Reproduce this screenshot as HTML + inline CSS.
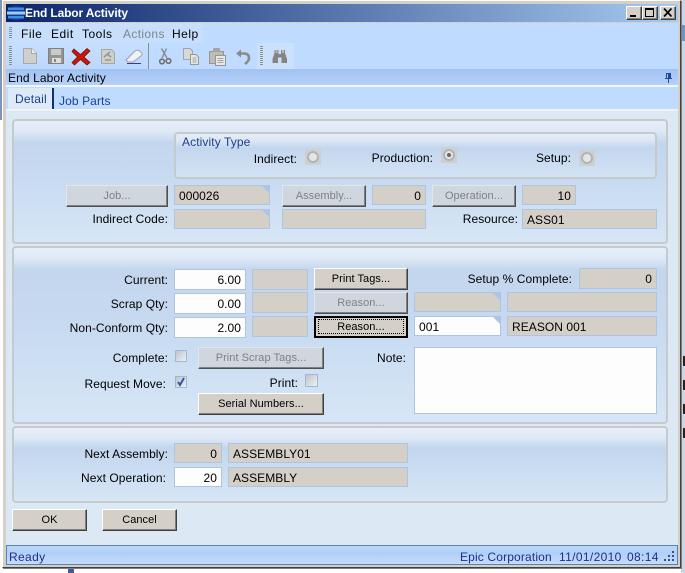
<!DOCTYPE html>
<html><head><meta charset="utf-8"><style>
html,body{margin:0;padding:0;width:685px;height:573px;overflow:hidden;background:#fff}
#r{position:absolute;left:0;top:0;width:685px;height:573px;overflow:hidden;font:12px "Liberation Sans",sans-serif;color:#000}
#r div,#r svg{position:absolute;box-sizing:border-box}
.t{white-space:nowrap;line-height:14px;letter-spacing:.1px}
.l{text-align:right;white-space:nowrap;line-height:14px;letter-spacing:.06px}
.p{left:12px;width:656px;border:2px solid #c6cacc;border-radius:4px;background:linear-gradient(#e6eef8 0,#dfe9f6 10px,#c3d6ee 22px,#c6d9f0 40%,#d6e6f6 100%)}
.f{border:1px solid #aec4e0;background:#d4d0c8;line-height:20px;padding:0 4px;white-space:nowrap;letter-spacing:.05px}
.w{background:#fdfdfd}.n{text-align:right}
.c:after{content:"";position:absolute;right:-1px;top:-1px;border-style:solid;border-width:0 9px 9px 0;border-color:transparent #aec4e6 transparent transparent}
.b{background:#d4d0c8;border:1px solid;border-color:#fff #404040 #404040 #fff;box-shadow:inset -1px -1px 0 #808080;text-align:center;font-size:11px;line-height:21px;letter-spacing:.05px;white-space:nowrap}
.d{background:#cfd6de;color:#7c8288;border-color:#e0e6ec #505050 #505050 #e0e6ec}
.g{background-image:repeating-linear-gradient(#8a9099 0,#8a9099 1px,transparent 1px,transparent 2px)}
.x{border:1px solid #9fb8da;background:linear-gradient(135deg,#bfc4ca,#eef0f2)}
.rd{width:16px;height:16px;background:#ccd0d3}
.rd:after{content:"";position:absolute;left:2px;top:2px;width:12px;height:12px;border-radius:50%;border:2px solid #b0b4b4;background:#e4e6e6;box-sizing:border-box}
</style></head><body><div id="r">
<div style="left:0;top:0;width:3px;height:120px;background:#7e95b5"></div>
<div style="left:0;top:120px;width:3px;height:453px;background:#fff"></div>
<div style="left:68px;top:566px;width:6px;height:7px;background:#3a5f9a"></div>
<div style="left:681px;top:0;width:4px;height:573px;background:#c9d6e6"></div>
<div style="left:682px;top:25px;width:3px;height:16px;background:#6f93c8"></div>
<div style="left:683px;top:356px;width:2px;height:10px;background:#222"></div>
<div style="left:683px;top:380px;width:2px;height:10px;background:#222"></div>
<div style="left:683px;top:404px;width:2px;height:10px;background:#222"></div>
<div style="left:683px;top:428px;width:2px;height:10px;background:#222"></div>
<!-- window -->
<div style="left:2px;top:0;width:679px;height:568px;background:#d4d0c8;border:1px solid #fff;border-right:1px solid #404040;border-bottom:1px solid #404040;box-shadow:1px 1px 0 #808080"></div>
<div style="left:6px;top:4px;width:672px;height:18px;background:linear-gradient(90deg,#0a246a,#a6caf0)"></div>
<svg style="left:7px;top:5px" width="18" height="16" viewBox="0 0 18 16"><ellipse cx="9" cy="8" rx="8.500" ry="7.500" fill="#17389a"/><rect x="1" y="2.500" width="16" height="2.500" fill="#3f8fe6"/><rect x="0" y="6.500" width="18" height="3" fill="#9ad0f6"/><rect x="1" y="11" width="16" height="2.500" fill="#3f8fe6"/></svg>
<div class="t" style="left:25px;top:6px;color:#fff;font-weight:bold;letter-spacing:-.15px">End Labor Activity</div>
<div class="b" style="left:626px;top:6px;width:16px;height:14px"></div>
<div style="left:630px;top:15px;width:6px;height:2px;background:#000"></div>
<div class="b" style="left:642px;top:6px;width:16px;height:14px"></div>
<div style="left:645px;top:8px;width:9px;height:9px;border:1px solid #000;border-top-width:2px"></div>
<div class="b" style="left:660px;top:6px;width:16px;height:14px"></div>
<svg style="left:663px;top:8px" width="10" height="9" viewBox="0 0 10 9"><path d="M1 0.500L8.500 8.500M8.500 0.500L1 8.500" stroke="#000" stroke-width="1.700" fill="none"/></svg>
<!-- menu/toolbars -->
<div style="left:6px;top:23px;width:672px;height:46px;background:#bfdbff"></div>
<div style="left:6px;top:23px;width:197px;height:20px;background:#c7dffd"></div>
<div style="left:6px;top:43px;width:143px;height:26px;background:linear-gradient(#c7dffd,#bcd8fd)"></div>
<div style="left:257px;top:43px;width:37px;height:26px;background:#cbe0fa"></div>
<div class="g" style="left:9px;top:27px;width:3px;height:11px"></div>
<div class="t" style="left:21px;top:27px;letter-spacing:.5px">File</div>
<div class="t" style="left:51px;top:27px;letter-spacing:.5px">Edit</div>
<div class="t" style="left:82px;top:27px;letter-spacing:.5px">Tools</div>
<div class="t" style="left:123px;top:27px;color:#7d8590;letter-spacing:.35px">Actions</div>
<div class="t" style="left:172px;top:27px;letter-spacing:.5px">Help</div>
<div class="g" style="left:9px;top:46px;width:3px;height:19px"></div>
<div class="g" style="left:260px;top:46px;width:3px;height:19px"></div>
<div style="left:148px;top:43px;width:1px;height:26px;background:#8a8f96"></div>
<svg style="left:20px;top:44px" width="280" height="24" viewBox="0 0 280 24">
<path d="M3.500 4.500H11.500L16.500 9.500V19.500H3.500Z" fill="#cfcfcf" stroke="#a8a8a8"/><path d="M11.500 4.500V9.500H16.500" fill="#eee" stroke="#a8a8a8"/>
<path d="M28.500 4.500H43.500V19.500H28.500Z" fill="#969696" stroke="#808080"/><rect x="31" y="5" width="10" height="6" fill="#cacaca"/><rect x="32" y="14" width="9" height="5" fill="#dedede"/><rect x="34" y="15" width="2" height="3" fill="#888"/>
<path d="M54 5L60.500 10.500L67 4.500L70 7L64 13L70 18.500L67 21L60.500 15.500L54.500 21L52 18.500L57.500 13L52 7.500Z" fill="#c5160f" stroke="#7e0e0a" stroke-width=".8"/>
<path d="M81.500 5.500H91.500L94.500 8.500V19.500H81.500Z" fill="#cfcfc9" stroke="#a6a6a6"/><path d="M84 13L90 8M85 16H91M87 10L91 13" stroke="#8c8c8c" stroke-width="1.300" fill="none"/>
<path d="M106 16L115 7Q117 5.500 119 6.500L122 9Q122.500 10.500 121 12L113 18H108Z" fill="#eef1f7" stroke="#98a0b2"/><path d="M107 19.500H121" stroke="#3a3f78" stroke-width="1"/>
<path d="M141.500 4.500L147 14M146.500 4.500L142 14" stroke="#8a8a8a" stroke-width="1.400" fill="none"/><circle cx="142" cy="17.500" r="2.300" fill="none" stroke="#707070" stroke-width="1.600"/><circle cx="148.500" cy="17" r="2.300" fill="none" stroke="#707070" stroke-width="1.600"/>
<path d="M163.500 4.500H170L172.500 7V15.500H163.500Z" fill="#d8d8d4" stroke="#a4a4a4"/><path d="M170.500 10.500H176L178.500 13V20.500H170.500Z" fill="#e6e6e2" stroke="#989898"/><path d="M172.500 14H176.500M172.500 16H176.500M172.500 18H176.500" stroke="#a4a4a4"/>
<path d="M189.500 7.500H203.500V19.500H189.500Z" fill="#bcbcb8" stroke="#969696"/><rect x="193" y="4" width="7" height="4" rx="1" fill="#a4a4a4"/><path d="M195.500 11.500H205.500V21.500H195.500Z" fill="#e8e8e4" stroke="#969696"/><path d="M197.500 14.500H203.500M197.500 16.500H203.500M197.500 18.500H203.500" stroke="#a4a4a4"/>
<path d="M219 9.500H224Q229 9.500 229 14Q229 17 225 20" fill="none" stroke="#8a8a8a" stroke-width="2.600"/><path d="M216 9.500L221 5.500V13.500Z" fill="#8a8a8a"/>
<path d="M254.500 6H258.500V10H261V6H265V9L267 15V19H261.500V13.500H258V19H252.500V15L254.500 9Z" fill="#848484"/><rect x="255.500" y="6" width="2" height="3" fill="#b8b8b8"/><rect x="262" y="6" width="2" height="3" fill="#b8b8b8"/>
</svg>
<div style="left:6px;top:69px;width:672px;height:16px;background:linear-gradient(#a1c1f2,#b6d1f7)"></div>
<div class="t" style="left:8px;top:71px;letter-spacing:.1px">End Labor Activity</div>
<svg style="left:664px;top:72px" width="9" height="11" viewBox="0 0 9 11"><path d="M2 1H7V6H8V7H1V6H2ZM4 2V6H3V2ZM4 7H5V11H4Z" fill="#1f4a9c" fill-rule="evenodd"/></svg>
<div style="left:6px;top:85px;width:672px;height:2px;background:#f2f7ff"></div>
<div style="left:6px;top:87px;width:672px;height:22px;background:#bfdbff"></div>
<div style="left:8px;top:88px;width:44px;height:22px;background:#dee9f8"></div>
<div style="left:52px;top:88px;width:2px;height:22px;background:#12306e"></div>
<div class="t" style="left:15px;top:92px;color:#1c3f8f;letter-spacing:.2px">Detail</div>
<div class="t" style="left:59px;top:94px;color:#1c3f8f;letter-spacing:.1px">Job Parts</div>
<div style="left:6px;top:109px;width:672px;height:2px;background:#f0f2f4"></div>
<div style="left:6px;top:111px;width:672px;height:434px;background:#dde8f5"></div>
<!-- panel 1 -->
<div class="p" style="top:119px;height:125px"></div>
<div style="left:174px;top:132px;width:483px;height:47px;border:2px solid #c6cacc;border-radius:4px;background:linear-gradient(#e4edf8 0,#dde8f5 6px,#c3d6ee 14px,#d3e3f5 100%)"></div>
<div class="t" style="left:182px;top:135px;color:#1c3f8f">Activity Type</div>
<div class="l" style="left:197px;top:152px;width:100px">Indirect:</div>
<div class="rd" style="left:305px;top:149px"></div>
<div class="l" style="left:333px;top:151px;width:100px">Production:</div>
<div class="rd" style="left:441px;top:147px"></div>
<div style="left:447px;top:153px;width:4px;height:4px;border-radius:50%;background:#666"></div>
<div class="l" style="left:471px;top:151px;width:100px">Setup:</div>
<div class="rd" style="left:579px;top:150px"></div>
<div class="b d" style="left:66px;top:185px;width:102px;height:22px">Job...</div>
<div class="f c" style="left:174px;top:185px;width:96px;height:20px">000026</div>
<div class="b d" style="left:282px;top:185px;width:84px;height:22px">Assembly...</div>
<div class="f n" style="left:372px;top:185px;width:54px;height:20px">0</div>
<div class="b d" style="left:432px;top:185px;width:84px;height:22px">Operation...</div>
<div class="f n" style="left:522px;top:185px;width:54px;height:20px">10</div>
<div class="l" style="left:40px;top:212px;width:128px">Indirect Code:</div>
<div class="f c" style="left:174px;top:209px;width:96px;height:20px"></div>
<div class="f" style="left:282px;top:209px;width:144px;height:20px"></div>
<div class="l" style="left:418px;top:212px;width:100px">Resource:</div>
<div class="f" style="left:522px;top:209px;width:135px;height:20px">ASS01</div>
<!-- panel 2 -->
<div class="p" style="top:246px;height:178px"></div>
<div class="l" style="left:40px;top:273px;width:128px">Current:</div>
<div class="f w n" style="left:174px;top:269px;width:72px;height:21px">6.00</div>
<div class="f" style="left:252px;top:269px;width:56px;height:21px"></div>
<div class="b" style="left:314px;top:268px;width:94px;height:22px">Print Tags...</div>
<div class="l" style="left:442px;top:272px;width:130px">Setup % Complete:</div>
<div class="f n" style="left:579px;top:268px;width:78px;height:21px">0</div>
<div class="l" style="left:40px;top:297px;width:128px">Scrap Qty:</div>
<div class="f w n" style="left:174px;top:293px;width:72px;height:21px">0.00</div>
<div class="f" style="left:252px;top:292px;width:56px;height:21px"></div>
<div class="b d" style="left:314px;top:292px;width:94px;height:22px">Reason...</div>
<div class="f c" style="left:414px;top:292px;width:87px;height:20px"></div>
<div class="f" style="left:507px;top:292px;width:150px;height:20px"></div>
<div class="l" style="left:40px;top:321px;width:128px">Non-Conform Qty:</div>
<div class="f w n" style="left:174px;top:317px;width:72px;height:21px">2.00</div>
<div class="f" style="left:252px;top:316px;width:56px;height:21px"></div>
<div class="b" style="left:314px;top:316px;width:94px;height:22px;border:2px solid #000;box-shadow:none;line-height:19px">Reason...</div>
<div style="left:318px;top:319px;width:86px;height:15px;border:1px dotted #000"></div>
<div class="f w c" style="left:414px;top:316px;width:87px;height:20px">001</div>
<div class="f" style="left:507px;top:316px;width:150px;height:20px">REASON 001</div>
<div class="l" style="left:40px;top:351px;width:128px">Complete:</div>
<div class="x" style="left:175px;top:350px;width:12px;height:12px"></div>
<div class="b d" style="left:198px;top:347px;width:126px;height:22px">Print Scrap Tags...</div>
<div class="l" style="left:306px;top:351px;width:100px">Note:</div>
<div class="f w" style="left:414px;top:347px;width:243px;height:67px"></div>
<div class="l" style="left:40px;top:377px;width:126px">Request Move:</div>
<div class="x" style="left:175px;top:376px;width:12px;height:12px"></div>
<svg style="left:176px;top:377px" width="10" height="10" viewBox="0 0 10 10"><path d="M2 5L4 8L8 1" fill="none" stroke="#2c5aa8" stroke-width="2"/></svg>
<div class="l" style="left:198px;top:376px;width:100px">Print:</div>
<div class="x" style="left:305px;top:374px;width:13px;height:13px"></div>
<div class="b" style="left:198px;top:393px;width:126px;height:22px">Serial Numbers...</div>
<!-- panel 3 -->
<div class="p" style="top:426px;height:77px;background:linear-gradient(#e6eef8 0,#dfe9f6 10px,#c3d6ee 20px,#d6e6f6 100%)"></div>
<div class="l" style="left:40px;top:447px;width:128px">Next Assembly:</div>
<div class="f n" style="left:174px;top:443px;width:48px;height:20px">0</div>
<div class="f" style="left:228px;top:443px;width:180px;height:20px">ASSEMBLY01</div>
<div class="l" style="left:40px;top:471px;width:126px">Next Operation:</div>
<div class="f w n" style="left:174px;top:467px;width:48px;height:20px">20</div>
<div class="f" style="left:228px;top:467px;width:180px;height:20px">ASSEMBLY</div>
<div class="b" style="left:12px;top:509px;width:75px;height:22px">OK</div>
<div class="b" style="left:102px;top:509px;width:75px;height:22px">Cancel</div>
<!-- status -->
<div style="left:6px;top:545px;width:672px;height:20px;border:1px solid #5f7fae;background:linear-gradient(#bcd7fb,#b1cff7 40%,#c5dcfb)"></div>
<div class="t" style="left:9px;top:550px;color:#1c2f8c;letter-spacing:.35px">Ready</div>
<div class="t" style="left:460px;top:550px;color:#1c2f8c;letter-spacing:.15px">Epic Corporation</div>
<div class="t" style="left:559px;top:550px;color:#1c2f8c;letter-spacing:.35px">11/01/2010</div>
<div class="t" style="left:627px;top:550px;color:#1c2f8c;letter-spacing:.35px">08:14</div>
<svg style="left:662px;top:550px" width="14" height="12" viewBox="0 0 14 12"><path d="M10 1h2v2h-2zM6 5h2v2H6zM10 5h2v2h-2zM2 9h2v2H2zM6 9h2v2H6zM10 9h2v2h-2z" fill="#3a4f8c"/></svg>
</div></body></html>
